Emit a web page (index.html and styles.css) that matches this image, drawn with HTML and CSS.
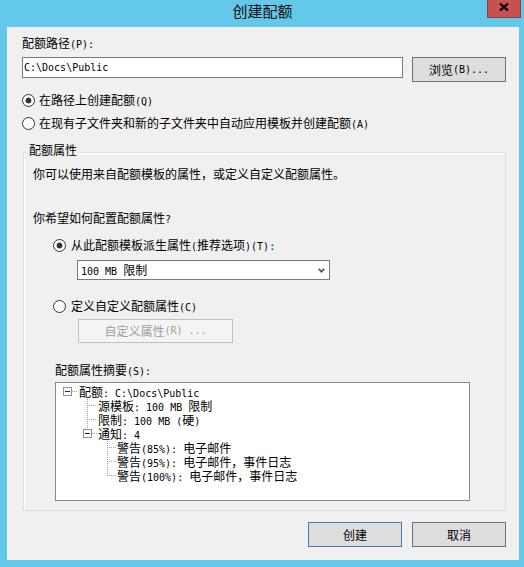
FILE: index.html
```html
<!DOCTYPE html>
<html lang="zh-CN">
<head>
<meta charset="utf-8">
<title>创建配额</title>
<link rel="stylesheet" href="styles.css">
</head>
<body>
<div class="window">
  <div class="titlebar">
    <span class="title">创建配额</span>
    <div class="close">
      <svg width="10" height="8" viewBox="0 0 10 8"><path d="M1 0.5 L9 7.5 M9 0.5 L1 7.5" stroke="#000" stroke-width="2.2" fill="none"/></svg>
    </div>
  </div>
  <div class="client">
    <div class="line path-label">配额路径<span class="a">(P):</span></div>
    <div class="path-row">
      <div class="input">C:\Docs\Public</div>
      <div class="btn browse">浏览<span class="a">(B)...</span></div>
    </div>
    <div class="radio-row r1"><span class="radio on"></span><span>在路径上创建配额<span class="a">(Q)</span></span></div>
    <div class="radio-row r2"><span class="radio"></span><span>在现有子文件夹和新的子文件夹中自动应用模板并创建配额<span class="a">(A)</span></span></div>
    <div class="group">
      <div class="line group-title">配额属性</div>
      <div class="line g-t1">你可以使用来自配额模板的属性，或定义自定义配额属性。</div>
      <div class="line g-t2">你希望如何配置配额属性<span class="a">?</span></div>
      <div class="radio-row r3"><span class="radio on"></span><span>从此配额模板派生属性<span class="a">(</span>推荐选项<span class="a">)(T):</span></span></div>
      <div class="select">
        <span><span class="a">100 MB </span>限制</span>
        <svg width="7" height="5" viewBox="0 0 7 5"><path d="M0.8 0.8 L3.5 3.6 L6.2 0.8" stroke="#5a5a5a" stroke-width="1.8" fill="none"/></svg>
      </div>
      <div class="radio-row r4"><span class="radio"></span><span>定义自定义配额属性<span class="a">(C)</span></span></div>
      <div class="btn custom">自定义属性<span class="a">(R) ...</span></div>
      <div class="line sum-label">配额属性摘要<span class="a">(S):</span></div>
      <div class="tree">
        <div class="node">
          <svg width="23" height="14"><g shape-rendering="crispEdges" fill="none">
            <line x1="16" y1="6.5" x2="22" y2="6.5" stroke="#a0a0a0" stroke-dasharray="1 1"/>
            <rect x="7.5" y="2.5" width="8" height="8" fill="#fff" stroke="#919191"/>
            <line x1="9" y1="6.5" x2="14" y2="6.5" stroke="#222"/>
          </g></svg>
          <span>配额<span class="a">: C:\Docs\Public</span></span>
        </div>
        <div class="node">
          <svg width="42" height="14"><g shape-rendering="crispEdges" stroke="#a0a0a0" stroke-dasharray="1 1">
            <line x1="31.5" y1="0" x2="31.5" y2="14"/>
            <line x1="33" y1="6.5" x2="41" y2="6.5"/>
          </g></svg>
          <span>源模板<span class="a">: 100 MB </span>限制</span>
        </div>
        <div class="node">
          <svg width="42" height="14"><g shape-rendering="crispEdges" stroke="#a0a0a0" stroke-dasharray="1 1">
            <line x1="31.5" y1="0" x2="31.5" y2="14"/>
            <line x1="33" y1="6.5" x2="41" y2="6.5"/>
          </g></svg>
          <span>限制<span class="a">: 100 MB (</span>硬<span class="a">)</span></span>
        </div>
        <div class="node">
          <svg width="42" height="14"><g shape-rendering="crispEdges" fill="none">
            <line x1="31.5" y1="0" x2="31.5" y2="2" stroke="#a0a0a0" stroke-dasharray="1 1"/>
            <line x1="36" y1="6.5" x2="41" y2="6.5" stroke="#a0a0a0" stroke-dasharray="1 1"/>
            <rect x="27.5" y="2.5" width="8" height="8" fill="#fff" stroke="#919191"/>
            <line x1="29" y1="6.5" x2="34" y2="6.5" stroke="#222"/>
          </g></svg>
          <span>通知<span class="a">: 4</span></span>
        </div>
        <div class="node">
          <svg width="61" height="14"><g shape-rendering="crispEdges" stroke="#a0a0a0" stroke-dasharray="1 1">
            <line x1="51.5" y1="0" x2="51.5" y2="14"/>
            <line x1="53" y1="6.5" x2="60" y2="6.5"/>
          </g></svg>
          <span>警告<span class="a">(85%): </span>电子邮件</span>
        </div>
        <div class="node">
          <svg width="61" height="14"><g shape-rendering="crispEdges" stroke="#a0a0a0" stroke-dasharray="1 1">
            <line x1="51.5" y1="0" x2="51.5" y2="14"/>
            <line x1="53" y1="6.5" x2="60" y2="6.5"/>
          </g></svg>
          <span>警告<span class="a">(95%): </span>电子邮件，事件日志</span>
        </div>
        <div class="node">
          <svg width="61" height="14"><g shape-rendering="crispEdges" stroke="#a0a0a0" stroke-dasharray="1 1">
            <line x1="51.5" y1="0" x2="51.5" y2="7"/>
            <line x1="53" y1="6.5" x2="60" y2="6.5"/>
          </g></svg>
          <span>警告<span class="a">(100%): </span>电子邮件，事件日志</span>
        </div>
      </div>
    </div>
    <div class="footer">
      <div class="btn default">创建</div>
      <div class="btn">取消</div>
    </div>
  </div>
</div>
</body>
</html>
```
FILE: styles.css
```css
* { box-sizing: border-box; }
html, body { margin: 0; padding: 0; }
body {
  width: 524px;
  height: 567px;
  overflow: hidden;
  background: #63c8ea;
  font-family: "Noto Sans CJK SC", sans-serif;
  font-size: 12px;
  line-height: 16px;
  color: #000;
}
.a {
  font-family: "DejaVu Sans Mono", monospace;
  font-size: 10px;
  line-height: 10px;
}
.titlebar {
  position: relative;
  height: 27px;
  display: flex;
  justify-content: center;
}
.title {
  font-size: 15px;
  line-height: 20px;
  margin-top: 1px;
  margin-left: 1px;
  color: #111;
}
.close {
  position: absolute;
  left: 487px;
  top: 0;
  width: 34px;
  height: 18px;
  background: #c75050;
  border: 1px solid #87403f;
  border-top: none;
  display: flex;
  justify-content: center;
  padding-top: 3px;
}
.close svg { display: block; }
.client {
  margin-left: 7px;
  width: 512px;
  height: 533px;
  background: #f0f0f0;
  padding: 0 13px 0 15px;
  display: flex;
  flex-direction: column;
  align-items: flex-start;
}
.line { height: 16px; white-space: nowrap; }
.path-label { margin-top: 8px; }
.path-row {
  margin-top: 6px;
  display: flex;
  align-items: flex-start;
}
.input {
  width: 381px;
  height: 21px;
  border: 1px solid #7a7a7a;
  background: #fff;
  padding-left: 1px;
  font-family: "DejaVu Sans Mono", monospace;
  font-size: 10px;
  line-height: 19px;
}
.btn {
  display: flex;
  align-items: center;
  justify-content: center;
  background: #e1e1e1;
  border: 1px solid #adadad;
  white-space: nowrap;
}
.browse {
  margin-left: 9px;
  width: 94px;
  height: 25px;
  border-color: #707070;
  background: #dddddd;
}
.radio-row {
  display: flex;
  align-items: center;
  height: 16px;
  gap: 4px;
  white-space: nowrap;
}
.radio {
  flex: none;
  width: 13px;
  height: 13px;
  border: 1px solid #333;
  border-radius: 50%;
  background: #fff;
}
.radio.on {
  background: radial-gradient(circle at center, #333 0, #333 2.6px, #fff 3.3px);
}
.r1 { margin-top: 10px; }
.r2 { margin-top: 7px; }
.group {
  margin-top: 21px;
  margin-left: 1px;
  width: 483px;
  height: 359px;
  border: 1px solid #d5dfe5;
  box-shadow: inset 1px 1px 0 #fff;
  padding-left: 9px;
  display: flex;
  flex-direction: column;
  align-items: flex-start;
}
.group-title {
  margin-top: -11px;
  margin-left: -6px;
  padding: 0 2px;
  background: #f0f0f0;
}
.g-t1 { margin-top: 8px; }
.g-t2 { margin-top: 28px; }
.r3 { margin-top: 11px; margin-left: 20px; gap: 5px; }
.select {
  margin-top: 7px;
  margin-left: 44px;
  width: 253px;
  height: 20px;
  border: 1px solid #7a7a7a;
  background: #fff;
  display: flex;
  align-items: center;
  justify-content: space-between;
  padding: 0 4px 0 3px;
  white-space: nowrap;
}
.select svg { display: block; }
.r4 { margin-top: 18px; margin-left: 20px; gap: 5px; }
.custom {
  margin-top: 5px;
  margin-left: 45px;
  width: 155px;
  height: 24px;
  background: #f4f4f4;
  border-color: #bfbfbf;
  color: #a0a0a0;
}
.sum-label { margin-top: 19px; margin-left: 22px; }
.tree {
  margin-top: 4px;
  margin-left: 22px;
  width: 415px;
  height: 119px;
  border: 1px solid #828790;
  background: #fff;
  padding-top: 3px;
}
.node {
  display: flex;
  height: 14px;
  line-height: 14px;
  white-space: nowrap;
  font-family: "Liberation Sans", "Noto Sans CJK SC", sans-serif;
}
.node .a {
  font-family: "DejaVu Sans Mono", monospace;
}
.node svg { flex: none; display: block; margin-top: -1px; }
.footer {
  align-self: stretch;
  margin-top: 11px;
  display: flex;
  justify-content: flex-end;
  gap: 10px;
}
.footer .btn {
  width: 94px;
  height: 25px;
  border-color: #707070;
  background: #dddddd;
}
.footer .default { border-color: #3c7fb1; }
```
